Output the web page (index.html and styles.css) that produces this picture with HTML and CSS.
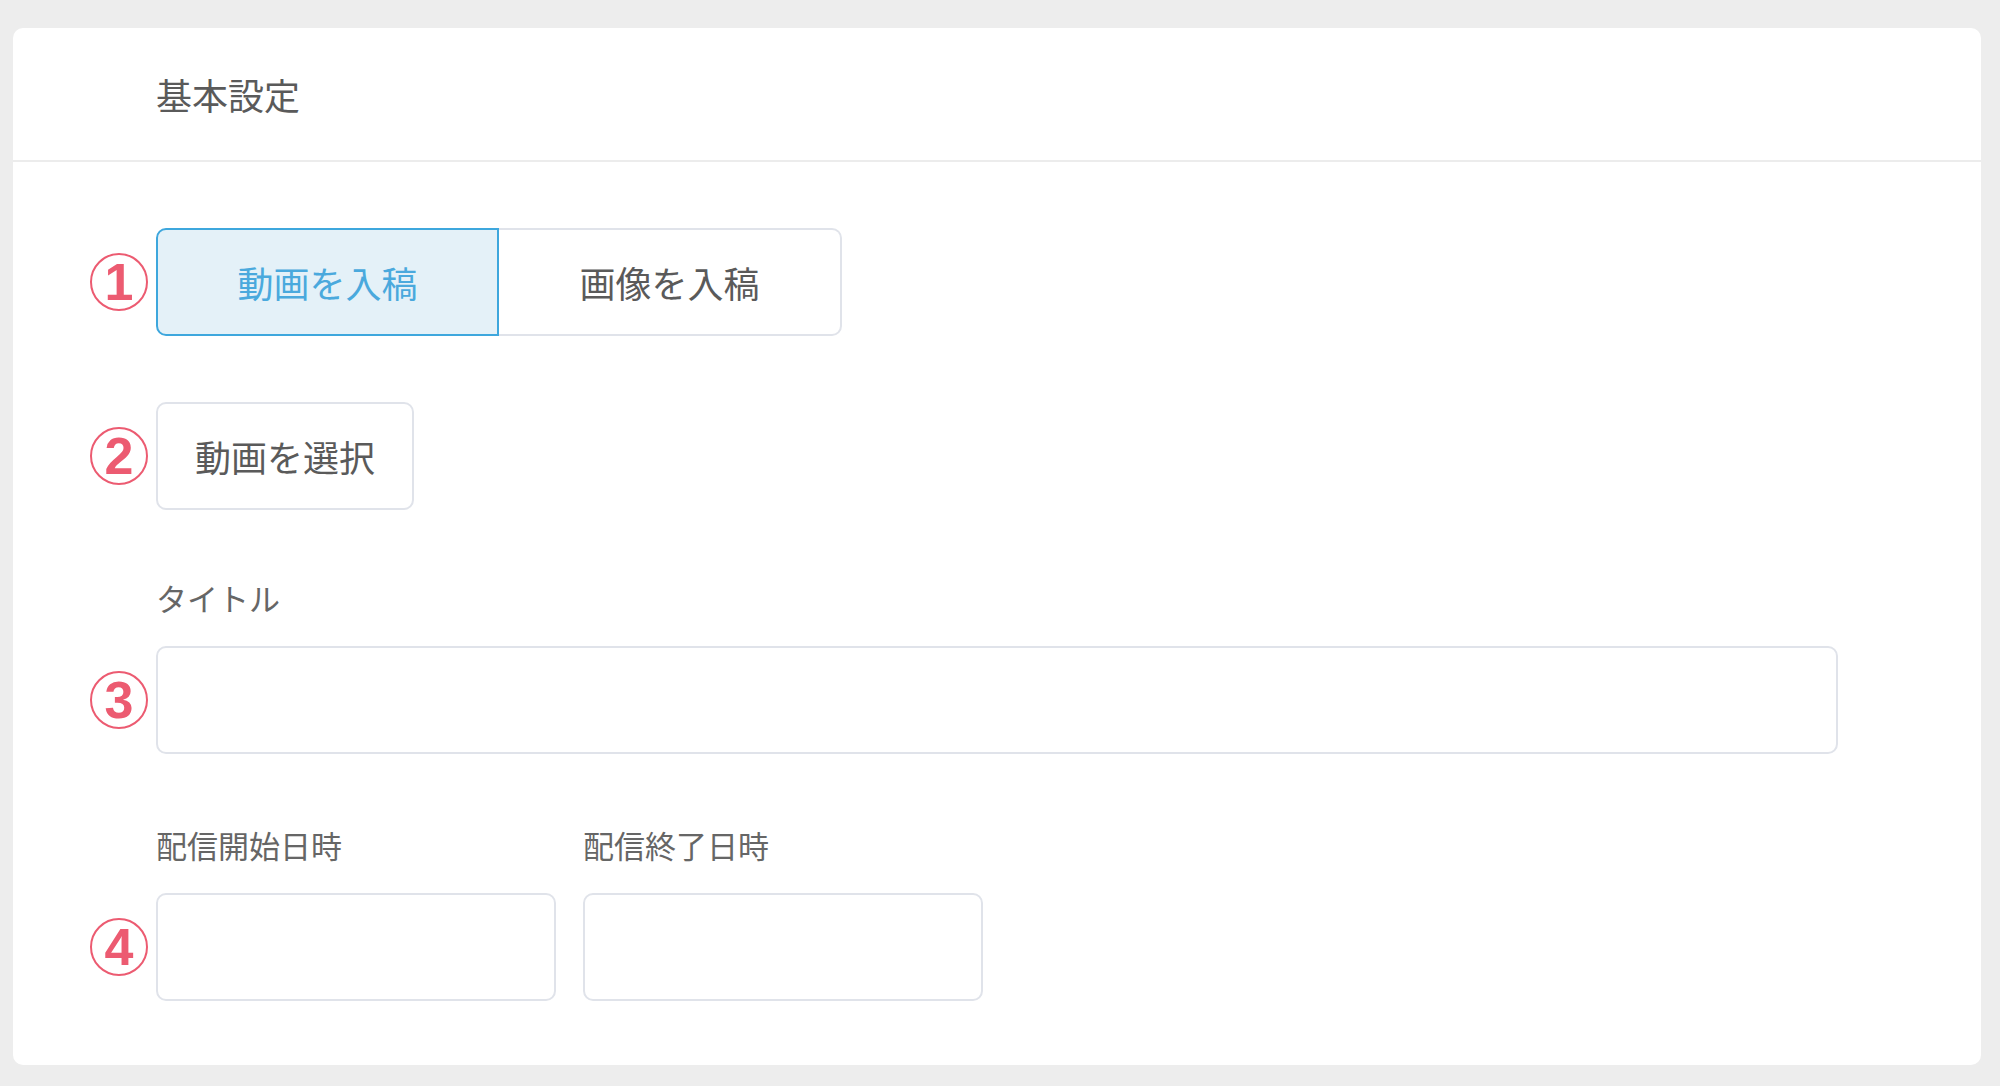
FILE: index.html
```html
<!DOCTYPE html>
<html lang="ja">
<head>
<meta charset="utf-8">
<title>基本設定</title>
<link rel="stylesheet" href="styles.css">
</head>
<body>
<div class="page">
  <section class="card">
    <header class="card-header">基本設定</header>
    <div class="card-body">
      <div class="row">
        <span class="badge">1</span>
        <div class="segmented">
          <button class="seg seg-active">動画を入稿</button>
          <button class="seg">画像を入稿</button>
        </div>
      </div>

      <div class="row row-gap">
        <span class="badge">2</span>
        <button class="select-btn">動画を選択</button>
      </div>

      <div class="row label-row">
        <span></span>
        <label class="label">タイトル</label>
      </div>
      <div class="row field-row">
        <span class="badge">3</span>
        <div class="input input-wide"></div>
      </div>

      <div class="row label-row label-row-2">
        <span></span>
        <div class="pair">
          <label class="label">配信開始日時</label>
          <label class="label">配信終了日時</label>
        </div>
      </div>
      <div class="row field-row">
        <span class="badge">4</span>
        <div class="pair">
          <div class="input input-date"></div>
          <div class="input input-date"></div>
        </div>
      </div>
    </div>
  </section>
</div>
</body>
</html>
```
FILE: styles.css
```css
* { box-sizing: border-box; }

body {
  margin: 0;
  background: #ededed;
  font-family: "Noto Sans CJK JP", "Noto Sans", sans-serif;
  color: #555;
}

.page {
  padding: 28px 19px 20px 13px;
}

.card {
  background: #fff;
  border-radius: 10px;
  padding-bottom: 64px;
}

.card-header {
  height: 134px;
  display: flex;
  align-items: center;
  padding-left: 143px;
  border-bottom: 2px solid #ececec;
  font-size: 36px;
  color: #5a5a5a;
}

.card-body {
  padding-top: 66px;
}

.row {
  display: grid;
  grid-template-columns: 143px auto;
  align-items: center;
  justify-content: start;
}

.row-gap { margin-top: 66px; }

.badge {
  justify-self: end;
  margin-right: 8px;
  width: 58px;
  height: 58px;
  border: 2px solid #ec5b71;
  border-radius: 50%;
  color: #ec5b71;
  font-family: "Liberation Sans", Arial, sans-serif;
  font-weight: 700;
  font-size: 52px;
  line-height: 54px;
  text-align: center;
}

.segmented {
  display: flex;
}

.seg {
  width: 343px;
  height: 108px;
  font-family: inherit;
  font-size: 36px;
  color: #5a5a5a;
  background: #fff;
  border: 2px solid #e0e3ea;
  padding: 0;
  cursor: pointer;
}

.seg:first-child {
  border-radius: 10px 0 0 10px;
}

.seg:last-child {
  border-left: none;
  border-radius: 0 10px 10px 0;
}

.seg-active {
  background: #e4f1f8;
  border-color: #3ea7dd;
  color: #4aa9dd;
}

.select-btn {
  height: 108px;
  padding: 0 37px;
  font-family: inherit;
  font-size: 36px;
  color: #5a5a5a;
  background: #fff;
  border: 2px solid #e0e3ea;
  border-radius: 10px;
  cursor: pointer;
}

.label-row {
  margin-top: 67px;
}

.label-row-2 {
  margin-top: 70px;
}

.label {
  display: block;
  font-size: 31px;
  line-height: 42px;
  color: #666;
}

.field-row {
  margin-top: 27px;
}

.pair {
  display: flex;
  gap: 27px;
}

.pair .label {
  width: 400px;
}

.input {
  height: 108px;
  border: 2px solid #e0e3ea;
  border-radius: 10px;
  background: #fff;
}

.input-wide { width: 1682px; }

.input-date { width: 400px; }
```
